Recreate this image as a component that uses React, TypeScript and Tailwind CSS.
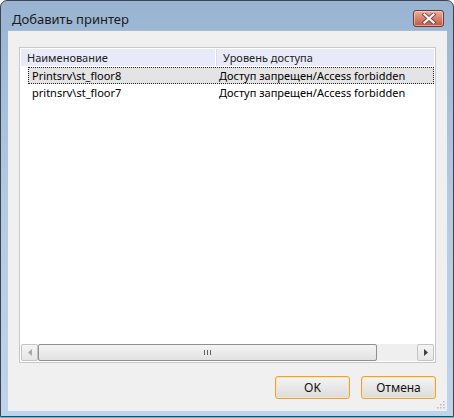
import React from "react";

const font = { fontFamily: '"Noto Sans", "Open Sans", sans-serif' };

function CloseButton() {
  return (
    <div className="w-[31px] h-[17px] rounded-[3px] border border-[#6a3a34] bg-gradient-to-b from-[#e9b0a4] via-[#d6826f] to-[#c0553e] flex items-center justify-center shadow-[inset_0_0_0_1px_rgba(255,225,215,0.55)]">
      <svg width="14" height="11" viewBox="0 0 14 11">
        <path d="M2.5 1.5 L11.5 9.5 M11.5 1.5 L2.5 9.5" stroke="#7a4a44" strokeWidth="4" strokeLinecap="square" />
        <path d="M2.5 1.5 L11.5 9.5 M11.5 1.5 L2.5 9.5" stroke="#f4f4f4" strokeWidth="2.2" strokeLinecap="square" />
      </svg>
    </div>
  );
}

function ArrowBtn({ dir }: { dir: "l" | "r" }) {
  return (
    <div className="w-[17px] h-[17px] shrink-0 rounded-[2px] border border-[#c4c4c4] bg-gradient-to-b from-[#f4f4f4] to-[#e6e6e6] flex items-center justify-center">
      <svg width="4" height="7" viewBox="0 0 4 7">
        {dir === "l" ? (
          <path d="M4 0 L0 3.5 L4 7 Z" fill="#a8a8a8" />
        ) : (
          <path d="M0 0 L4 3.5 L0 7 Z" fill="#404040" />
        )}
      </svg>
    </div>
  );
}

export default function App() {
  return (
    <div className="w-[454px] h-[418px] bg-white" style={font}>
      <div className="w-full h-[417px] rounded-t-[7px] border border-[#3d4450] bg-gradient-to-b from-[#99b4d1] via-[#b4cbe4] to-[#bfd4ec] flex flex-col pl-[7px] pr-[6px] pb-[5px] shadow-[0_1px_0_#2fd0e8]">
        <div className="h-[29px] flex items-start shrink-0">
          <div className="pl-[4px] pt-[10px] text-[13px] leading-[17px] text-[#1a1a1a]">Добавить принтер</div>
          <div className="ml-auto mr-[3px] mt-[9px]">
            <CloseButton />
          </div>
        </div>
        <div className="flex-1 bg-[#f0f0f0] border-t border-[#a9bdd4] flex flex-col px-[11px] pt-[16px] relative">
          <div className="h-[316px] border border-[#c8c8c8] bg-white p-[1px] flex flex-col">
            <div className="h-[18px] flex bg-[#e9eaf9] border-b border-white text-[11px] leading-[17px] text-[#222]">
              <div className="w-[195px] pl-[6px] border-r border-[#ffffff]">Наименование</div>
              <div className="flex-1 pl-[6px] border-l border-[#dcdce8]">Уровень доступа</div>
            </div>
            <div className="flex-1 flex flex-col text-[11px] leading-[16px] text-black">
              <div className="h-[17px] flex ml-[7px] bg-[#e4e4e4] border border-dotted border-[#202020]">
                <div className="w-[187px] pl-[3px]">Printsrv\st_floor8</div>
                <div className="flex-1 pl-[3px]">Доступ запрещен/Access forbidden</div>
              </div>
              <div className="h-[17px] flex ml-[7px] border border-transparent">
                <div className="w-[187px] pl-[3px]">pritnsrv\st_floor7</div>
                <div className="flex-1 pl-[3px]">Доступ запрещен/Access forbidden</div>
              </div>
            </div>
            <div className="h-[17px] flex bg-[#efefef]">
              <ArrowBtn dir="l" />
              <div className="w-[339px] h-[17px] rounded-[2px] border border-[#8f8f8f] bg-gradient-to-b from-[#f4f4f4] to-[#e2e2e2] flex items-center justify-center gap-[2px]">
                <div className="w-px h-[5px] bg-[#606060]" />
                <div className="w-px h-[5px] bg-[#606060]" />
                <div className="w-px h-[5px] bg-[#606060]" />
              </div>
              <div className="flex-1" />
              <ArrowBtn dir="r" />
            </div>
          </div>
          <div className="flex justify-end gap-[11px] mt-[13px]">
            <button className="w-[75px] h-[23px] rounded-[3px] border border-[#e8a23c] bg-gradient-to-b from-[#f4f4f4] to-[#dcdcdc] text-[12px] text-[#111] shadow-[inset_0_0_0_1px_#fbe3b4]">OK</button>
            <button className="w-[75px] h-[23px] rounded-[3px] border border-[#e8a23c] bg-gradient-to-b from-[#f4f4f4] to-[#dcdcdc] text-[12px] text-[#111] shadow-[inset_0_0_0_1px_#fbe3b4]">Отмена</button>
          </div>
          <svg className="absolute right-[2px] bottom-[2px]" width="9" height="9" viewBox="0 0 9 9">
            {[[7, 1], [4, 4], [7, 4], [1, 7], [4, 7], [7, 7]].map(([x, y], i) => (
              <rect key={i} x={x} y={y} width="1.5" height="1.5" fill="#b8b8b8" />
            ))}
          </svg>
        </div>
      </div>
    </div>
  );
}
